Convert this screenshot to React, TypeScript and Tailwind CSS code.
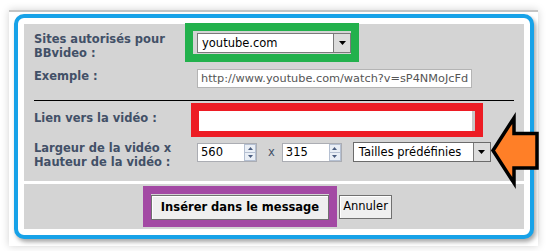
const label = "text-[11.5px] font-bold leading-[14px] text-[#425067]";

function Arrow() {
  return (
    <div className="flex w-[17px] items-center justify-center border-l border-[#7a7a7a] bg-[#dcdcdc]">
      <svg width="7" height="4" viewBox="0 0 7 4">
        <path d="M0 0h7L3.5 4z" fill="#000" />
      </svg>
    </div>
  );
}

function Spin({ value }: { value: string }) {
  return (
    <div className="mt-[2px] flex h-[19px] w-[60px] border border-[#abadb3] bg-white">
      <div className="flex-1 pl-[3px] text-[11.5px] leading-[17px] text-black">{value}</div>
      <div className="flex w-[12px] flex-col">
        <div className="flex flex-1 items-center justify-center border border-[#b5c0d2] bg-[#eaeff6]">
          <svg width="5" height="3" viewBox="0 0 5 3">
            <path d="M0 3h5L2.5 0z" fill="#4a5d80" />
          </svg>
        </div>
        <div className="flex flex-1 items-center justify-center border border-t-0 border-[#b5c0d2] bg-[#eaeff6]">
          <svg width="5" height="3" viewBox="0 0 5 3">
            <path d="M0 0h5L2.5 3z" fill="#4a5d80" />
          </svg>
        </div>
      </div>
    </div>
  );
}

export default function App() {
  return (
    <div className="relative h-[251px] w-[547px] overflow-hidden bg-white pl-[9px] pt-[10px] font-['DejaVu_Sans',sans-serif]">
      <div className="h-[236px] w-[529px] border-t-2 border-[#c4c4c4] bg-white pl-[5px] pt-[2px] shadow-[0_0_8px_rgba(0,0,0,0.18)]">
        <div className="h-[225px] w-[520px] rounded-[10px] border-4 border-[#17a2e8] bg-white p-[6px] shadow-[2px_3px_4px_rgba(0,0,0,0.35)]">
          <div className="flex h-full flex-col gap-[3px]">
            <div className="h-[157px] bg-[#d4d4d4] pl-[10px]">
              {/* sites */}
              <div className="-mt-px flex items-start">
                <div className={`${label} w-[151px] pt-[9px]`}>
                  Sites autorisés pour
                  <br />
                  BBvideo :
                </div>
                <div className="h-[39px] w-[174px] border-8 border-[#22b14c] pl-[4px] pt-[2px]">
                  <div className="flex h-[20px] w-[154px] border border-[#7a7a7a] bg-white">
                    <div className="flex-1 pl-[4px] text-[11.5px] leading-[18px] text-black">youtube.com</div>
                    <Arrow />
                  </div>
                </div>
              </div>
              {/* exemple */}
              <div className="mt-[7px] flex items-start">
                <div className={`${label} w-[163px]`}>Exemple :</div>
                <div className="h-[19px] w-[275px] whitespace-nowrap border border-[#b4b4b4] bg-white pl-[3px] text-[11.3px] leading-[17px] text-[#555]">
                  http://www.youtube.com/watch?v=sP4NMoJcFd
                </div>
              </div>
              <div className="mt-[12px] h-px w-[480px] bg-black" />
              {/* lien */}
              <div className="mt-[2px] flex items-start">
                <div className={`${label} w-[157px] pt-[8px]`}>Lien vers la vidéo :</div>
                <div className="h-[34px] w-[292px] border-x-8 border-b-[6px] border-t-8 border-[#ed1c24]">
                  <div className="h-full border-r-[3px] border-[#c8c8c8] bg-white" />
                </div>
              </div>
              {/* taille */}
              <div className="mt-[4px] flex items-start">
                <div className={`${label} w-[163px]`}>
                  Largeur de la vidéo x
                  <br />
                  Hauteur de la vidéo :
                </div>
                <Spin value="560" />
                <div className="ml-[11px] mr-[7px] mt-[2px] text-[11.5px] leading-[18px] text-[#425067]">x</div>
                <Spin value="315" />
                <div className="ml-[11px] mt-[1px] flex h-[20px] w-[138px] border border-[#6b6b6b] bg-white">
                  <div className="flex-1 pl-[5px] text-[11.5px] leading-[18px] text-black">Tailles prédéfinies</div>
                  <Arrow />
                </div>
              </div>
            </div>
            <div className="flex flex-1 items-start bg-[#d4d4d4] pl-[119px] pt-[2px]">
              <div className="h-[41px] w-[194px] border-8 border-[#a349a4]">
                <button className="h-full w-full border border-[#707070] bg-[#efefef] text-[11.5px] font-bold text-black shadow-[inset_1px_1px_0_#fff]">
                  Insérer dans le message
                </button>
              </div>
              <button className="ml-[2px] mt-[9px] h-[24px] w-[53px] border border-[#707070] bg-[#efefef] text-[11.5px] text-black shadow-[inset_1px_1px_0_#fff]">
                Annuler
              </button>
            </div>
          </div>
        </div>
      </div>
      <svg className="pointer-events-none absolute left-0 top-0" width="547" height="251">
        <polygon
          points="493,150.5 514,118 514,133.5 537,133.5 537,168 514,168 514,183"
          fill="#ff7f27"
          stroke="#000"
          strokeWidth="3.5"
          strokeLinejoin="miter"
        />
      </svg>
    </div>
  );
}
